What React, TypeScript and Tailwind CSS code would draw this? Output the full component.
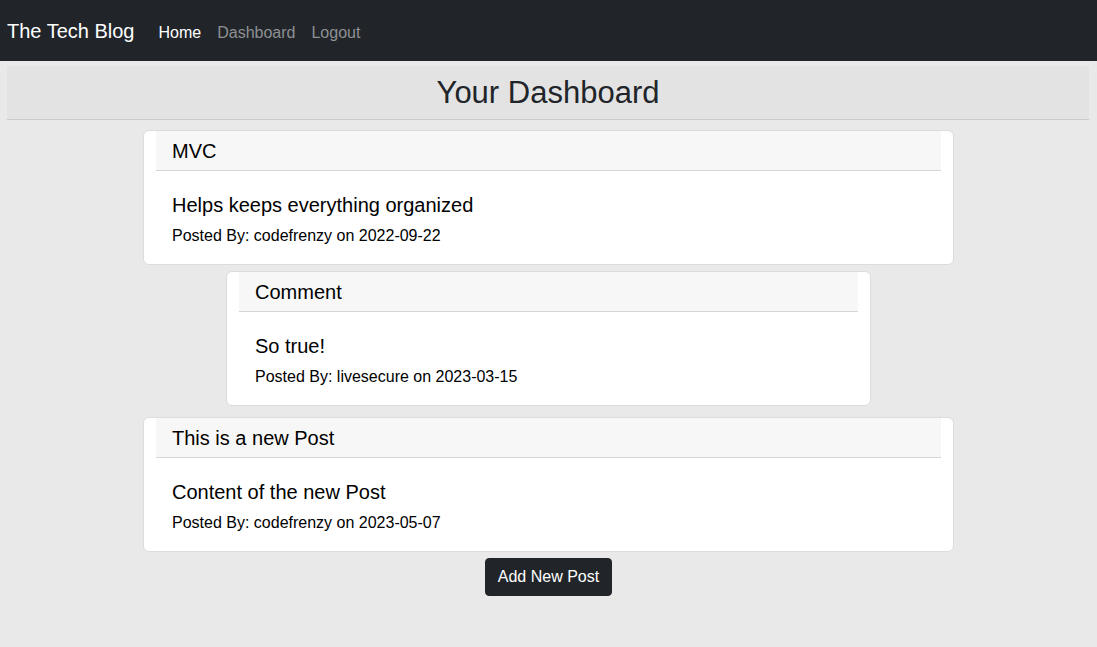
import React from "react";

type Item = { title: string; body: string; by: string; date: string; width: string };

function Card({ title, body, by, date, width }: Item) {
  return (
    <div className={`${width} mx-auto bg-white border border-[#dcdcdc] rounded-[6px] px-3`}>
      <div className="bg-[#f7f7f7] border-b border-[#d6d6d6] pl-4 pt-[8px] pb-[7px] text-[20px] leading-[24px] text-black">
        {title}
      </div>
      <div className="pl-4 pt-[22px] pb-[16px] text-black">
        <div className="text-[20px] leading-[24px]">{body}</div>
        <div className="mt-[7px] text-[16px] leading-[24px]">
          Posted By: {by} on {date}
        </div>
      </div>
    </div>
  );
}

export default function App() {
  return (
    <div
      className="min-h-screen bg-[#e9e9e9]"
      style={{ fontFamily: '"Liberation Sans", Arial, Helvetica, sans-serif' }}
    >
      <nav className="h-[61px] bg-[#212529] flex items-baseline pl-[7px] pt-[16px]">
        <a className="text-white text-[20px] leading-[30px] mr-[16px]">The Tech Blog</a>
        <a className="text-white text-[16px] leading-[24px] px-2">Home</a>
        <a className="text-[#8e9093] text-[16px] leading-[24px] px-2">Dashboard</a>
        <a className="text-[#8e9093] text-[16px] leading-[24px] px-2">Logout</a>
      </nav>
      <div className="pl-[7px] pr-[8px] pt-[5px]">
        <div className="bg-[#e3e3e3] border-b border-[#cbcbcb] rounded-t-[3px] py-2 text-center text-[31px] leading-[37px] text-[#212529]">
          Your Dashboard
        </div>
      </div>
      <div className="flex flex-col items-center pt-[10px]">
        <Card
          title="MVC"
          body="Helps keeps everything organized"
          by="codefrenzy"
          date="2022-09-22"
          width="w-[811px]"
        />
        <div className="mt-[6px]">
          <Card
            title="Comment"
            body="So true!"
            by="livesecure"
            date="2023-03-15"
            width="w-[645px]"
          />
        </div>
        <div className="mt-[11px]">
          <Card
            title="This is a new Post"
            body="Content of the new Post"
            by="codefrenzy"
            date="2023-05-07"
            width="w-[811px]"
          />
        </div>
        <button className="mt-[6px] bg-[#212529] text-white text-[16px] leading-[24px] px-3 py-[6px] border border-[#212529] rounded-[4px]">
          Add New Post
        </button>
      </div>
    </div>
  );
}
